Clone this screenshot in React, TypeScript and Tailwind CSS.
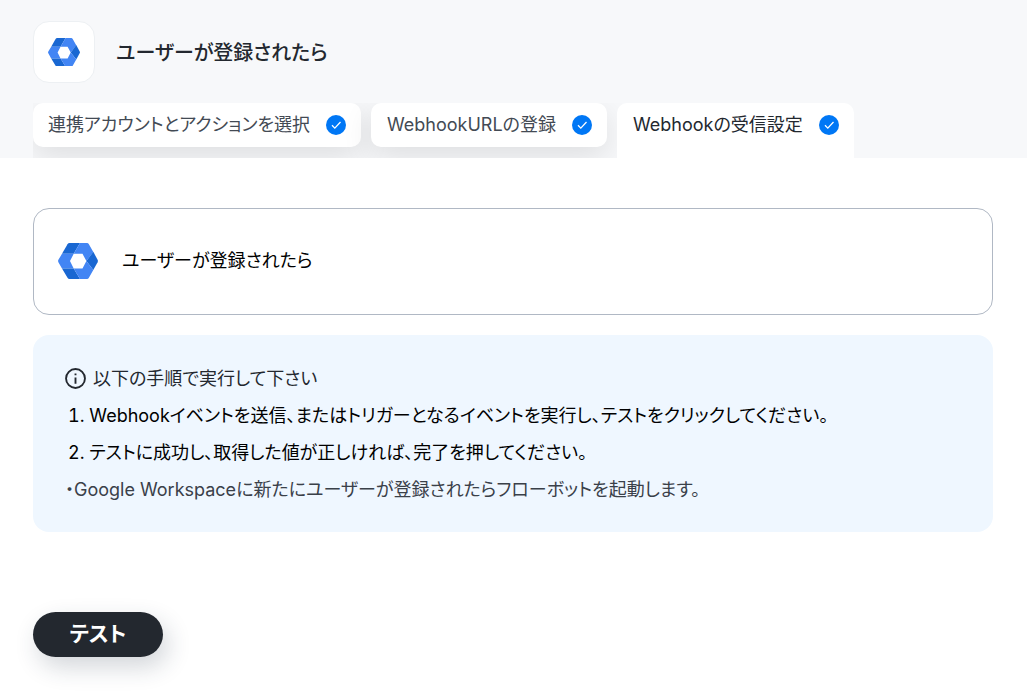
import clsx from "clsx";

interface StepTab {
  label: string;
  active?: boolean;
}

const TABS: StepTab[] = [
  { label: "連携アカウントとアクションを選択" },
  { label: "WebhookURLの登録" },
  { label: "Webhookの受信設定", active: true },
];

const STEPS = [
  "Webhookイベントを送信、またはトリガーとなるイベントを実行し、テストをクリックしてください。",
  "テストに成功し、取得した値が正しければ、完了を押してください。",
];

function WorkspaceLogo({ className }: { className: string }) {
  return (
    <svg viewBox="0 0 40 36" className={className} aria-hidden="true">
      <path d="M11.5 0H22L15.700 10.800H4L9.500 1.200Q10.200 0 11.500 0Z" fill="#1967d2" />
      <path d="M4 10.800H15.700L12 18 15.700 25.500H4L.4 19.200Q-.2 18 .4 16.800Z" fill="#4285f4" />
      <path d="M4 25.500H15.700L22 36H11.500Q10.200 36 9.500 34.800Z" fill="#1967d2" />
      <path d="M22 0H29Q30.200 0 30.900 1.200L35.300 9 28.400 18 24.500 10.800H15.700Z" fill="#4285f4" />
      <path d="M35.300 8.800 39.600 16.800Q40.200 18 39.600 19.200L35.300 27 28.400 18Z" fill="#1967d2" />
      <path d="M28.400 18 35.300 27 30.900 34.800Q30.200 36 29 36H22L15.700 25.500H24.500Z" fill="#4285f4" />
    </svg>
  );
}

function DoneBadge() {
  return (
    <svg viewBox="0 0 20 20" className="size-5 shrink-0" aria-hidden="true">
      <circle cx="10" cy="10" r="10" fill="#0077f5" />
      <path d="M6 10.300 8.800 13.100 14.500 7" fill="none" stroke="#fff" strokeWidth="1.300" />
    </svg>
  );
}

function InfoIcon() {
  return (
    <svg viewBox="0 0 20 20" className="size-[21px] shrink-0" aria-hidden="true" fill="none" stroke="#23282f" strokeWidth="1.800">
      <circle cx="10" cy="10" r="9" />
      <path d="M10 9V15M10 5.200V7" />
    </svg>
  );
}

export default function App() {
  return (
    <div className="min-h-screen bg-white font-['Inter','Noto_Sans_CJK_JP',sans-serif] text-lg leading-6 [font-feature-settings:'palt'] text-[#23282f]">
      <header className="bg-[#f7f8fa] px-[33px] pt-[21px]">
        <div className="flex items-center gap-[21px]">
          <div className="flex size-[62px] items-center justify-center rounded-2xl border border-[#edf0f3] bg-white">
            <WorkspaceLogo className="w-8" />
          </div>
          <h1 className="pt-0.5 text-xl font-medium">ユーザーが登録されたら</h1>
        </div>
        <nav className="mt-5 flex h-[55px] w-fit items-start gap-2.5 overflow-hidden">
          {TABS.map((tab) => (
            <button
              key={tab.label}
              type="button"
              className={clsx(
                "flex items-start gap-4 rounded-t-[10px] bg-white pt-2.5 pr-[15px] pl-4 whitespace-nowrap first:pl-[15px]",
                tab.active
                  ? "h-[55px]"
                  : "h-11 rounded-b-[10px] text-[#434a54] shadow-[0_10px_30px_rgba(0,0,0,0.1)]"
              )}
            >
              <span>{tab.label}</span>
              <span className="pt-0.5">
                <DoneBadge />
              </span>
            </button>
          ))}
        </nav>
      </header>

      <main className="pt-[50px] pr-[34px] pl-[33px]">
        <section className="flex h-[107px] items-center gap-6 rounded-2xl border border-[#b0b8c4] px-6 pb-0.5 text-black">
          <WorkspaceLogo className="w-10" />
          <p>ユーザーが登録されたら</p>
        </section>

        <section className="mt-5 rounded-2xl bg-[#eff7ff] px-8 pt-[25px] pb-6">
          <h2 className="flex items-center gap-[7px] leading-[37px]">
            <InfoIcon />
            以下の手順で実行して下さい
          </h2>
          <ol className="list-inside list-decimal pl-[3px] leading-[37px] text-black">
            {STEPS.map((step) => (
              <li key={step}>{step}</li>
            ))}
          </ol>
          <p className="leading-[37px] text-[#3a4049]">・Google Workspaceに新たにユーザーが登録されたらフローボットを起動します。</p>
        </section>

        <button
          type="button"
          className="mt-20 h-[45px] w-[130px] rounded-full bg-[#23282f] pb-0.5 text-[21px] font-bold text-white shadow-[5px_10px_25px_rgba(35,50,70,0.2)]"
        >
          テスト
        </button>
      </main>
    </div>
  );
}
